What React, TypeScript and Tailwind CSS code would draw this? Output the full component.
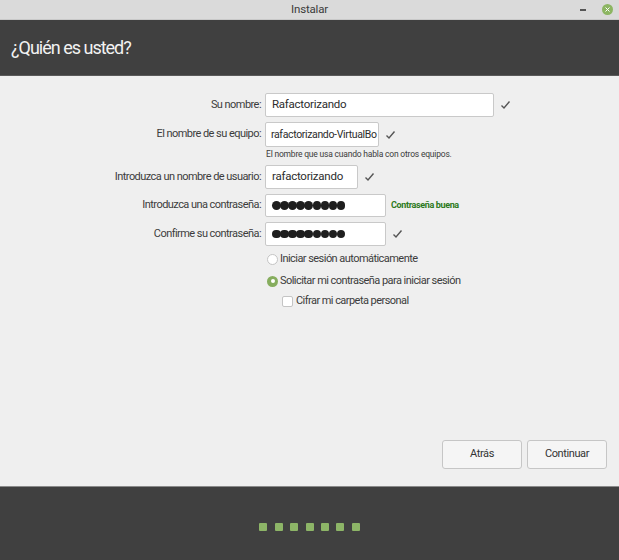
import React from 'react';

const font = { fontFamily: 'Roboto, "Liberation Sans", Arial, sans-serif' };

function Check() {
  return (
    <svg width="11" height="10" viewBox="0 0 11 10" className="shrink-0">
      <path d="M1.5 5.5 L4 8 L9.5 1.5" fill="none" stroke="#555" strokeWidth="1.4" />
    </svg>
  );
}

function Dots() {
  return (
    <div className="flex items-center">
      {Array.from({ length: 9 }).map((_, i) => (
        <div key={i} className="h-[8.5px] w-[8.5px] rounded-full bg-[#1e1e1e] mr-[-0.4px]" />
      ))}
    </div>
  );
}

function Row({ label, children, cls }: { label: string; children: React.ReactNode; cls: string }) {
  return (
    <div className={`flex items-center ${cls}`}>
      <div className="w-[262px] pr-[1px] text-right text-[11px] tracking-[-0.55px] text-[#3c3c3c]">{label}</div>
      <div className="ml-[3px] flex items-center gap-[6px]">{children}</div>
    </div>
  );
}

const inputCls =
  'flex items-center overflow-hidden whitespace-nowrap rounded-[2px] border border-[#c9c9c9] bg-white text-[#2c2c2c]';

export default function App() {
  return (
    <div className="flex h-[560px] w-[619px] flex-col overflow-hidden bg-[#efefef]" style={font}>
      {/* title bar */}
      <div className="relative flex h-[20px] shrink-0 items-center justify-center border-b border-[#c8c8c8] bg-[#dadada]">
        <span className="text-[11.5px] tracking-[-0.2px] text-[#3a3a3a]">Instalar</span>
        <div className="absolute right-[6px] top-[4px] flex items-center gap-[16px]">
          <div className="h-[2px] w-[6px] bg-[#555]" />
          <div className="flex h-[11px] w-[11px] items-center justify-center rounded-full bg-[#8cb562]">
            <svg width="5" height="5" viewBox="0 0 5 5">
              <path d="M0.5 0.5 L4.5 4.5 M4.5 0.5 L0.5 4.5" stroke="#fff" strokeWidth="1" />
            </svg>
          </div>
        </div>
      </div>

      {/* header */}
      <div className="flex h-[56px] shrink-0 items-center border-b border-[#5a5a5a] bg-[#404040] pl-[11px]">
        <span className="pb-[1px] text-[18px] tracking-[-1px] text-[#f2f2f2]">¿Quién es usted?</span>
      </div>

      {/* body */}
      <div className="flex flex-1 flex-col pt-[17px]">
        <Row label="Su nombre:" cls="h-[24px]">
          <div className={`${inputCls} h-[24px] w-[229px] pl-[6px] text-[11.5px] tracking-[-0.25px]`}>Rafactorizando</div>
          <Check />
        </Row>
        <Row label="El nombre de su equipo:" cls="mt-[5px] h-[25px]">
          <div className={`${inputCls} h-[25px] w-[114px] pl-[5px] text-[10.5px] tracking-[-0.35px]`}>rafactorizando-VirtualBo</div>
          <Check />
        </Row>
        <div className="ml-[266px] mt-[1px] h-[13px] text-[8.5px] leading-[13px] tracking-[-0.2px] text-[#3c3c3c]">
          El nombre que usa cuando habla con otros equipos.
        </div>
        <Row label="Introduzca un nombre de usuario:" cls="mt-[4px] h-[24px]">
          <div className={`${inputCls} h-[24px] w-[93px] pl-[6px] text-[11.5px] tracking-[-0.25px]`}>rafactorizando</div>
          <Check />
        </Row>
        <Row label="Introduzca una contraseña:" cls="mt-[5px] h-[23px]">
          <div className={`${inputCls} h-[23px] w-[121px] pl-[6px]`}>
            <Dots />
          </div>
          <span className="-ml-[1px] text-[9px] font-bold tracking-[-0.35px] text-[#2c7a1c]">Contraseña buena</span>
        </Row>
        <Row label="Confirme su contraseña:" cls="mt-[5px] h-[24px]">
          <div className={`${inputCls} h-[24px] w-[121px] border-[#a9c98b] pl-[6px]`}>
            <Dots />
          </div>
          <Check />
        </Row>

        <div className="ml-[267px] mt-[5px] flex h-[16px] items-center gap-[2px] text-[11px] tracking-[-0.55px] text-[#3c3c3c]">
          <div className="h-[11px] w-[11px] rounded-full border border-[#c4c4c4] bg-white" />
          <span>Iniciar sesión automáticamente</span>
        </div>
        <div className="ml-[267px] mt-[6px] flex h-[16px] items-center gap-[2px] text-[11px] tracking-[-0.55px] text-[#3c3c3c]">
          <div className="flex h-[11px] w-[11px] items-center justify-center rounded-full bg-[#86ad5e]">
            <div className="h-[4px] w-[4px] rounded-full bg-white" />
          </div>
          <span>Solicitar mi contraseña para iniciar sesión</span>
        </div>
        <div className="ml-[282px] mt-[4px] flex h-[16px] items-center gap-[3px] text-[11px] tracking-[-0.55px] text-[#3c3c3c]">
          <div className="h-[11px] w-[11px] rounded-[2px] border border-[#c4c4c4] bg-white" />
          <span>Cifrar mi carpeta personal</span>
        </div>

        <div className="mb-[17px] mt-auto flex justify-end gap-[5px] pr-[12px]">
          <button className="h-[29px] w-[80px] rounded-[3px] border border-[#c6c6c6] bg-[#f5f5f5] text-[11px] tracking-[-0.4px] text-[#333]">
            Atrás
          </button>
          <button className="h-[29px] w-[80px] rounded-[3px] border border-[#c6c6c6] bg-[#f5f5f5] text-[11px] tracking-[-0.4px] text-[#333]">
            Continuar
          </button>
        </div>
      </div>

      {/* footer */}
      <div className="flex h-[74px] shrink-0 items-center justify-center border-t border-[#8a8a8a] bg-[#404040] pt-[6px]">
        <div className="flex gap-[7.4px]">
          {Array.from({ length: 7 }).map((_, i) => (
            <div key={i} className="h-[8px] w-[8px] rounded-[1px] bg-[#8db567]" />
          ))}
        </div>
      </div>
    </div>
  );
}
